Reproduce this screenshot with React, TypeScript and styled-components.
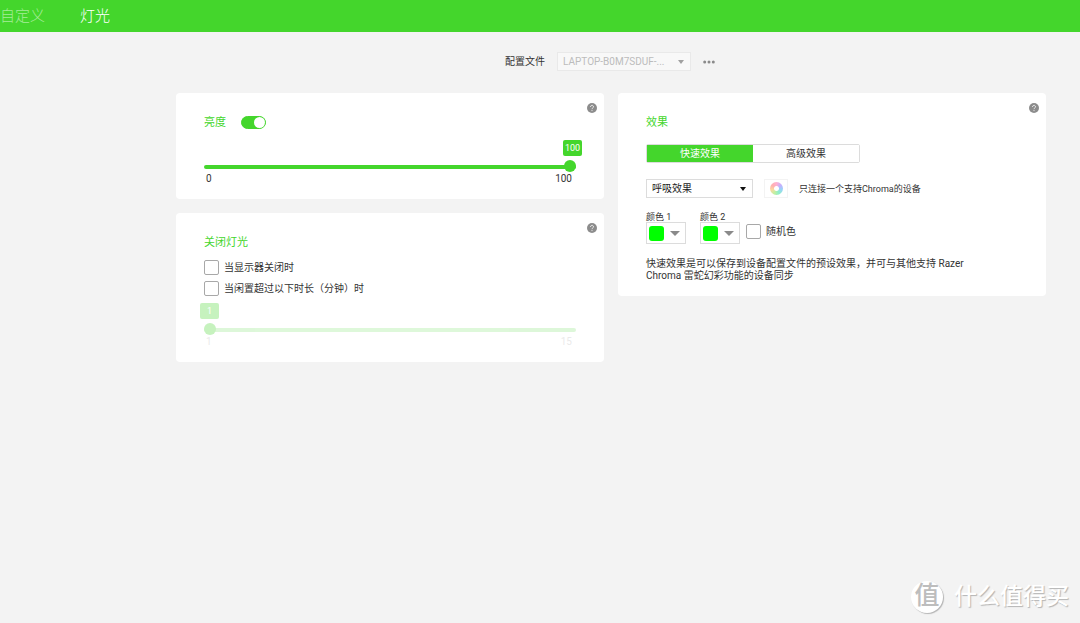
import React, { useState } from "react";
import styled, { createGlobalStyle, css } from "styled-components";

const green = "#44d62c";

const GlobalStyle = createGlobalStyle`
  * { box-sizing: border-box; }
  body {
    margin: 0;
    background: #f3f3f3;
    color: #333;
    font: 10px/12px Roboto, "Noto Sans CJK SC", sans-serif;
  }
  button, select, input { font: inherit; color: inherit; }
`;

const Page = styled.div`
  position: relative;
  display: flex;
  flex-direction: column;
  min-height: 100vh;
  overflow: hidden;
`;

const TopBar = styled.nav`
  display: flex;
  align-items: center;
  gap: 35px;
  height: 32px;
  background: ${green};
`;

const TopLink = styled.a<{ $active?: boolean }>`
  font-size: 15px;
  line-height: 20px;
  font-weight: 300;
  text-decoration: none;
  color: ${(p) => (p.$active ? "#fff" : "#a5ec99")};
`;

const Content = styled.main`
  flex: 1;
  padding: 20px 34px 20px 176px;
`;

const ProfileBar = styled.div`
  display: flex;
  justify-content: center;
  align-items: center;
  gap: 12px;
  height: 19px;
  margin-bottom: 22px;
  padding-right: 2px;
`;

const SelectBox = styled.span<{ $width: number; $disabled?: boolean }>`
  position: relative;
  display: block;
  width: ${(p) => p.$width}px;
  height: 19px;
  color: ${(p) => (p.$disabled ? "#bcbcbc" : "#222")};

  select {
    display: block;
    width: 100%;
    height: 100%;
    padding: 0 20px 0 5px;
    appearance: none;
    border: 1px solid ${(p) => (p.$disabled ? "#e9e9e9" : "#dcdcdc")};
    border-radius: 0;
    background: ${(p) => (p.$disabled ? "#f8f8f8" : "#fff")};
    opacity: 1;
  }
  svg {
    position: absolute;
    right: 7px;
    top: 8px;
    pointer-events: none;
    fill: ${(p) => (p.$disabled ? "#a0a0a0" : "#111")};
  }
`;

const MoreButton = styled.button`
  display: flex;
  padding: 0;
  border: 0;
  background: none;
  svg { fill: #8a8a8a; }
`;

const Columns = styled.div`
  display: grid;
  grid-template-columns: 1fr 1fr;
  gap: 14px;
  align-items: start;
`;

const Column = styled.div`
  display: flex;
  flex-direction: column;
  gap: 14px;
`;

const Card = styled.section`
  position: relative;
  padding: 20px 28px 14px;
  border-radius: 4px;
  background: #fff;
`;

const HelpButton = styled.button`
  position: absolute;
  top: 10px;
  right: 7px;
  display: flex;
  padding: 0;
  border: 0;
  background: none;
`;

const CardHead = styled.div`
  display: flex;
  align-items: center;
  gap: 15px;
  height: 20px;
`;

const CardTitle = styled.h2`
  margin: 0;
  font-size: 11px;
  line-height: 20px;
  font-weight: 400;
  color: ${green};
`;

const Switch = styled.input`
  appearance: none;
  display: flex;
  justify-content: flex-end;
  width: 25px;
  height: 13px;
  margin: 0 0 1px;
  border: 1px solid ${green};
  border-radius: 7px;
  background: #fff;

  &::before {
    content: "";
    width: 11px;
    height: 11px;
    border-radius: 50%;
    background: ${green};
  }
  &:not(:checked) { justify-content: flex-start; }
  &:checked { background: ${green}; }
  &:checked::before { background: #fff; }
`;

const SliderBox = styled.div<{ $dim?: boolean }>`
  opacity: ${(p) => (p.$dim ? 0.3 : 1)};
  color: ${(p) => (p.$dim ? "#bbb" : "#333")};
  ${CardHead} + && { margin-top: ${(p) => (p.$dim ? 0 : 7)}px; }
`;

const thumb = css`
  appearance: none;
  width: 12px;
  height: 12px;
  margin-top: -5px;
  border: 0;
  border-radius: 50%;
  background: ${green};
`;

const Range = styled.input<{ $dim?: boolean }>`
  appearance: none;
  display: block;
  width: 100%;
  height: 12px;
  margin: 0;
  background: none;
  &::-webkit-slider-runnable-track {
    height: 4px;
    border-radius: 2px;
    background: ${(p) => (p.$dim ? "#92e783" : green)};
  }
  &::-webkit-slider-thumb { ${thumb} }
`;

const Bubble = styled.output<{ $side: "left" | "right" }>`
  display: block;
  width: 19px;
  height: 16px;
  margin: ${(p) => (p.$side === "right" ? "0 -6px 5px auto" : "0 0 5px -4px")};
  border-radius: 2px;
  background: ${green};
  color: #fff;
  font-size: 9px;
  line-height: 16px;
  text-align: center;
`;

const Scale = styled.div`
  display: flex;
  justify-content: space-between;
  padding: 0 4px 0 2px;
`;

const CheckLabel = styled.label`
  display: flex;
  align-items: center;
  gap: 5px;
  height: 15px;
`;

const Checkbox = styled.input`
  appearance: none;
  width: 15px;
  height: 15px;
  margin: 0;
  border: 1px solid #a8a8a8;
  border-radius: 2px;
  background: #fff;
  &:checked { background: ${green}; }
`;

const CheckList = styled.div`
  display: flex;
  flex-direction: column;
  gap: 6px;
  margin: 7px 0;
`;

const Tabs = styled.div`
  display: grid;
  grid-template-columns: 1fr 1fr;
  width: 214px;
  height: 19px;
  margin: 11px 0 16px;
  border: 1px solid #dcdcdc;
  border-radius: 2px;
`;

const Tab = styled.button<{ $active?: boolean }>`
  padding: 0;
  border: 0;
  background: ${(p) => (p.$active ? green : "#fff")};
  color: ${(p) => (p.$active ? "#fff" : "#333")};
`;

const EffectRow = styled.div`
  display: flex;
  align-items: center;
  gap: 11px;
  margin-bottom: 14px;
`;

const ChromaButton = styled.button`
  display: flex;
  justify-content: center;
  align-items: center;
  width: 24px;
  height: 19px;
  padding: 0;
  border: 1px solid #f3f3f3;
  background: #fff;
`;

const Wheel = styled.span`
  width: 13px;
  height: 13px;
  border-radius: 50%;
  background:
    radial-gradient(circle, #fff 0 2px, transparent 3px),
    conic-gradient(#ffb0d0, #c4b0ff, #98d4f8, #90f0c8, #c4f0a0, #fbd8a0, #ffb0b0, #ffb0d0);
`;

const SmallText = styled.span`
  font-size: 9px;
`;

const ColorRow = styled.div`
  display: flex;
  align-items: flex-end;
  gap: 14px;
`;

const ColorField = styled.label`
  display: flex;
  flex-direction: column;
  font-size: 9px;
  line-height: 10px;
`;

const ColorButton = styled.button`
  display: flex;
  align-items: center;
  gap: 6px;
  width: 40px;
  height: 22px;
  padding: 0 2px;
  border: 1px solid #dcdcdc;
  background: #fff;
`;

const Swatch = styled.span`
  width: 15px;
  height: 15px;
  border-radius: 3px;
  background: #00ff00;
`;

const RandomColor = styled(CheckLabel)`
  margin: 0 0 5px -8px;
`;

const Description = styled.p`
  max-width: 330px;
  margin: 14px 0 0;
`;

const Watermark = styled.div`
  position: absolute;
  right: 11px;
  bottom: 9px;
  display: flex;
  align-items: center;
  gap: 11px;
  color: #fff;
  font-size: 23px;
  line-height: 34px;
  font-weight: 500;
  text-shadow: 1px 1px 1px #b4b4b4;
`;

const Seal = styled.span`
  width: 32px;
  height: 32px;
  border-radius: 50%;
  background: #fff;
  box-shadow: 1px 1px 1px #b4b4b4;
  color: #bdbdbd;
  font-size: 25px;
  line-height: 30px;
  text-align: center;
  text-shadow: none;
`;

const Caret = () => (
  <svg width="6" height="4" viewBox="0 0 6 4" aria-hidden="true">
    <path d="M0 0h6L3 4z" />
  </svg>
);

const Help = () => (
  <HelpButton aria-label="帮助">
    <svg width="10" height="10" viewBox="0 0 10 10" aria-hidden="true">
      <circle cx="5" cy="5" r="5" fill="#8c8c8c" />
      <path d="M3.5 4c0-2.200 3-2.200 3-.2C6.500 5 5 4.900 5 6.200M5 7.100v1" fill="none" stroke="#eee" strokeWidth="1" />
    </svg>
  </HelpButton>
);

const ColorPicker = ({ id, label }: { id: string; label: string }) => (
  <ColorField htmlFor={id}>
    {label}
    <ColorButton id={id} aria-haspopup="dialog">
      <Swatch />
      <svg width="10" height="5" viewBox="0 0 10 5" fill="#8a8a8a" aria-hidden="true">
        <path d="M0 0h10L5 5z" />
      </svg>
    </ColorButton>
  </ColorField>
);

export default function App() {
  const [brightness, setBrightness] = useState(100);
  const [quick, setQuick] = useState(true);

  return (
    <Page>
      <GlobalStyle />
      <TopBar>
        <TopLink href="#customize">自定义</TopLink>
        <TopLink href="#lighting" $active>灯光</TopLink>
      </TopBar>
      <Content>
        <ProfileBar>
          <label htmlFor="profile">配置文件</label>
          <SelectBox $width={134} $disabled>
            <select id="profile" disabled>
              <option>LAPTOP-B0M7SDUF-...</option>
            </select>
            <Caret />
          </SelectBox>
          <MoreButton aria-label="更多">
            <svg width="12" height="4" viewBox="0 0 12 4" aria-hidden="true">
              <circle cx="1.700" cy="2" r="1.500" />
              <circle cx="6" cy="2" r="1.500" />
              <circle cx="10.300" cy="2" r="1.500" />
            </svg>
          </MoreButton>
        </ProfileBar>

        <Columns>
          <Column>
            <Card>
              <Help />
              <CardHead>
                <CardTitle id="brightness">亮度</CardTitle>
                <Switch type="checkbox" role="switch" defaultChecked aria-labelledby="brightness" />
              </CardHead>
              <SliderBox>
                <Bubble $side="right">{brightness}</Bubble>
                <Range
                  type="range"
                  min={0}
                  max={100}
                  value={brightness}
                  aria-labelledby="brightness"
                  onChange={(e) => setBrightness(Number(e.target.value))}
                />
                <Scale>
                  <span>0</span>
                  <span>100</span>
                </Scale>
              </SliderBox>
            </Card>

            <Card>
              <Help />
              <CardHead>
                <CardTitle>关闭灯光</CardTitle>
              </CardHead>
              <CheckList>
                <CheckLabel>
                  <Checkbox type="checkbox" />
                  当显示器关闭时
                </CheckLabel>
                <CheckLabel>
                  <Checkbox type="checkbox" />
                  当闲置超过以下时长（分钟）时
                </CheckLabel>
              </CheckList>
              <SliderBox $dim>
                <Bubble $side="left">1</Bubble>
                <Range $dim type="range" min={1} max={15} defaultValue={1} disabled aria-label="闲置时长" />
                <Scale>
                  <span>1</span>
                  <span>15</span>
                </Scale>
              </SliderBox>
            </Card>
          </Column>

          <Card>
            <Help />
            <CardHead>
              <CardTitle id="effect">效果</CardTitle>
            </CardHead>
            <Tabs role="tablist">
              <Tab role="tab" aria-selected={quick} $active={quick} onClick={() => setQuick(true)}>
                快速效果
              </Tab>
              <Tab role="tab" aria-selected={!quick} $active={!quick} onClick={() => setQuick(false)}>
                高级效果
              </Tab>
            </Tabs>
            <EffectRow>
              <SelectBox $width={107}>
                <select aria-labelledby="effect">
                  <option>呼吸效果</option>
                </select>
                <Caret />
              </SelectBox>
              <ChromaButton aria-label="Chroma">
                <Wheel />
              </ChromaButton>
              <SmallText>只连接一个支持Chroma的设备</SmallText>
            </EffectRow>
            <ColorRow>
              <ColorPicker id="color-1" label="颜色 1" />
              <ColorPicker id="color-2" label="颜色 2" />
              <RandomColor>
                <Checkbox type="checkbox" />
                随机色
              </RandomColor>
            </ColorRow>
            <Description>
              快速效果是可以保存到设备配置文件的预设效果，并可与其他支持 Razer Chroma 雷蛇幻彩功能的设备同步
            </Description>
          </Card>
        </Columns>
      </Content>
      <Watermark>
        <Seal>值</Seal>
        什么值得买
      </Watermark>
    </Page>
  );
}
